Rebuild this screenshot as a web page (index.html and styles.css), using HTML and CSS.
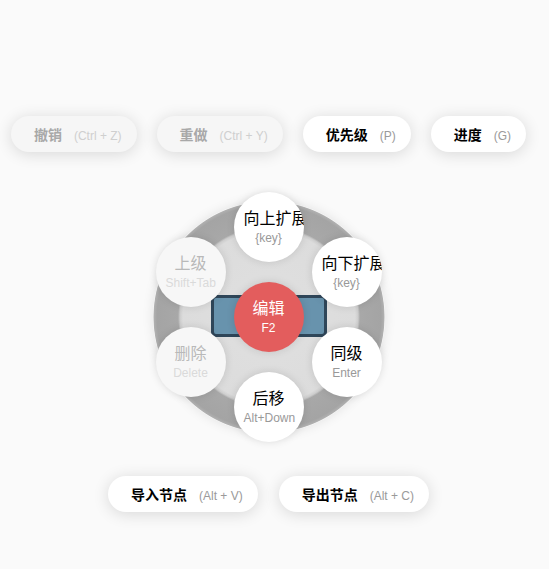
FILE: index.html
```html
<!DOCTYPE html>
<html lang="zh-CN">

<head>
    <meta charset="UTF-8">
    <title>脑图快捷菜单</title>
    <link rel="stylesheet" href="styles.css">
</head>

<body>
    <div class="page">
        <!-- 顶部命令 -->
        <div class="toolbar top">
            <div class="cmd disabled"><span class="cmd-label">撤销</span><span class="cmd-key">(Ctrl + Z)</span></div>
            <div class="cmd disabled"><span class="cmd-label">重做</span><span class="cmd-key">(Ctrl + Y)</span></div>
            <div class="cmd"><span class="cmd-label">优先级</span><span class="cmd-key">(P)</span></div>
            <div class="cmd"><span class="cmd-label">进度</span><span class="cmd-key">(G)</span></div>
        </div>

        <!-- 环形菜单 -->
        <div class="wheel">
            <div class="ring"></div>
            <div class="node-box"></div>

            <div class="btn pos-top"><span class="btn-label">向上扩展</span><span class="btn-key">{key}</span></div>
            <div class="btn pos-tr"><span class="btn-label">向下扩展</span><span class="btn-key">{key}</span></div>
            <div class="btn pos-br"><span class="btn-label">同级</span><span class="btn-key">Enter</span></div>
            <div class="btn pos-bottom"><span class="btn-label">后移</span><span class="btn-key">Alt+Down</span></div>
            <div class="btn pos-bl disabled"><span class="btn-label">删除</span><span class="btn-key">Delete</span></div>
            <div class="btn pos-tl disabled"><span class="btn-label">上级</span><span class="btn-key">Shift+Tab</span></div>
            <div class="btn pos-center main"><span class="btn-label">编辑</span><span class="btn-key">F2</span></div>
        </div>

        <!-- 底部命令 -->
        <div class="toolbar bottom">
            <div class="cmd"><span class="cmd-label">导入节点</span><span class="cmd-key">(Alt + V)</span></div>
            <div class="cmd"><span class="cmd-label">导出节点</span><span class="cmd-key">(Alt + C)</span></div>
        </div>
    </div>
</body>

</html>
```

FILE: styles.css
```css
* {
    padding: 0px;
    margin: 0px;
    box-sizing: border-box;
}

body {
    background: #fafafa;
    font-family: "Liberation Sans", "Noto Sans CJK SC", sans-serif;
    color: #000;
}

.page {
    width: 537px;
    height: 569px;
    padding-top: 116px;
    display: flex;
    flex-direction: column;
    align-items: center;
}

.toolbar {
    display: flex;
    justify-content: center;
    gap: 20px;
}

.toolbar.bottom {
    gap: 21px;
}

.cmd {
    height: 36px;
    line-height: 37px;
    padding: 0 15px 0 23px;
    border-radius: 18px;
    background: #fff;
    box-shadow: 0 2px 16px rgba(0, 0, 0, 0.14);
    white-space: nowrap;
}

.cmd-label {
    font-size: 14px;
    font-weight: bold;
    color: #000;
}

.cmd-key {
    font-size: 12px;
    color: #9a9a9a;
    margin-left: 12px;
}

.cmd.disabled {
    background: #f6f6f6;
}

.cmd.disabled .cmd-label {
    color: #a8a8a8;
}

.cmd.disabled .cmd-key {
    color: #cfcfcf;
}

.wheel {
    position: relative;
    width: 250px;
    height: 250px;
    margin: 40px 0 34px;
}

.ring {
    position: absolute;
    left: 9px;
    top: 9px;
    width: 232px;
    height: 232px;
    border-radius: 50%;
    background: radial-gradient(circle, #e0e0e0 0, #dcdcdc 86px, #cdcdcd 89px, #a8a8a8 91px, #a4a4a4 112px, #b0b0b0 115px, rgba(220, 220, 220, 0) 116px);
    box-shadow: 0 0 12px rgba(0, 0, 0, 0.1);
}

.node-box {
    position: absolute;
    left: 67px;
    top: 103px;
    width: 116px;
    height: 42px;
    border: 3px solid #2f4659;
    border-radius: 5px;
    background: #6893ad;
}

.btn {
    position: absolute;
    width: 70px;
    height: 70px;
    border-radius: 50%;
    background: #fff;
    box-shadow: 0 0 8px rgba(0, 0, 0, 0.12);
    display: flex;
    flex-direction: column;
    justify-content: center;
    padding: 1px 10px 0;
    overflow: hidden;
    text-align: center;
    white-space: nowrap;
}

.btn-label {
    display: block;
    font-size: 16px;
    line-height: 21px;
    color: #000;
}

.btn-key {
    display: block;
    font-size: 12px;
    line-height: 18px;
    color: #999;
}

.btn.disabled {
    background: #f7f7f7;
}

.btn.disabled .btn-label {
    color: #b9b9b9;
}

.btn.disabled .btn-key {
    color: #dadada;
}

.btn.main {
    background: #e35d5d;
}

.btn.main .btn-label,
.btn.main .btn-key {
    color: #fff;
}

.pos-top { left: 90px; top: 0px; }
.pos-tr { left: 168px; top: 45px; }
.pos-br { left: 168px; top: 135px; }
.pos-bottom { left: 90px; top: 180px; }
.pos-bl { left: 12px; top: 135px; }
.pos-tl { left: 12px; top: 45px; }
.pos-center { left: 90px; top: 90px; }
```
